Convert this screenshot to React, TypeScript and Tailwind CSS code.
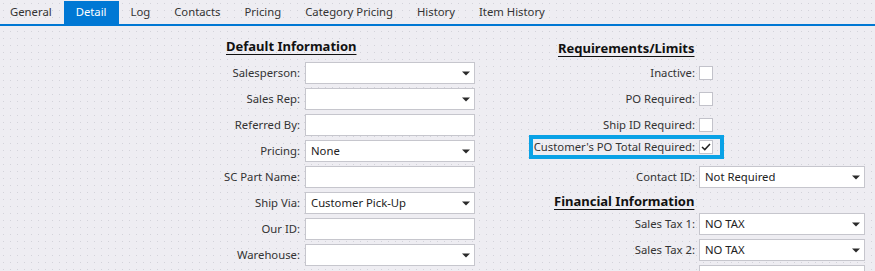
import React from "react";

const tabs = ["General", "Detail", "Log", "Contacts", "Pricing", "Category Pricing", "History", "Item History"];

function Arrow() {
  return (
    <svg width="8" height="5" viewBox="0 0 8 5" className="shrink-0">
      <path d="M0 0.5 H8 L4 4.5 Z" fill="#2a2a2a" />
    </svg>
  );
}

function Field({ value = "", select = false, width }: { value?: string; select?: boolean; width: string }) {
  return (
    <div className={`${width} h-[22px] bg-white border border-[#c6c6cd] flex items-center pl-[5px] pr-[4px] text-[#222]`}>
      <span className="flex-1 truncate">{value}</span>
      {select && <Arrow />}
    </div>
  );
}

function Check({ checked = false }: { checked?: boolean }) {
  return (
    <div className="w-[14px] h-[14px] shrink-0 bg-white border border-[#c2c2ca] flex items-center justify-center">
      {checked && (
        <svg width="10" height="8" viewBox="0 0 10 8">
          <path d="M1 4 L3.8 6.6 L9 1" stroke="#222" strokeWidth="1.5" fill="none" />
        </svg>
      )}
    </div>
  );
}

function LeftRow({ label, value, select }: { label: string; value?: string; select?: boolean }) {
  return (
    <div className="h-[26px] flex items-center">
      <div className="w-[301px] text-right pr-[1px]">{label}</div>
      <div className="w-[4px]" />
      <Field value={value} select={select} width="w-[170px]" />
    </div>
  );
}

function RightRow({ label, children }: { label: string; children: React.ReactNode }) {
  return (
    <div className="h-[26px] flex items-center">
      <div className="w-[167px] text-right pr-[1px]">{label}</div>
      <div className="w-[3px]" />
      {children}
    </div>
  );
}

export default function App() {
  return (
    <div
      className="w-[875px] h-[271px] overflow-hidden bg-[#eeedf2] bg-[radial-gradient(circle,#d3d3da_0.7px,transparent_0.9px)] bg-[length:7px_7px] text-[11.3px] text-[#333]"
      style={{ fontFamily: '"Noto Sans", "Open Sans", sans-serif' }}
    >
      <div className="h-[24px] flex items-end border-b-2 border-[#0078d4] box-content">
        {tabs.map((t, i) => (
          <div
            key={t}
            className={`h-[23px] flex items-center ${i === 0 ? "pl-[10px] pr-[12px]" : "px-[12px]"} ${
              t === "Detail" ? "bg-[#0078d4] text-white" : "text-[#333]"
            }`}
          >
            {t}
          </div>
        ))}
      </div>
      <div className="flex">
        <div className="w-[529px] shrink-0">
          <div className="h-[34px] pt-[11px] pl-[226px]">
            <span className="font-bold text-[13px] underline underline-offset-[3px] text-[#111]">Default Information</span>
          </div>
          <LeftRow label="Salesperson:" select />
          <LeftRow label="Sales Rep:" select />
          <LeftRow label="Referred By:" />
          <LeftRow label="Pricing:" value="None" select />
          <LeftRow label="SC Part Name:" />
          <LeftRow label="Ship Via:" value="Customer Pick-Up" select />
          <LeftRow label="Our ID:" />
          <LeftRow label="Warehouse:" select />
        </div>
        <div className="w-[346px] shrink-0">
          <div className="h-[34px] pt-[13px] pl-[29px]">
            <span className="font-bold text-[13px] underline underline-offset-[3px] text-[#111]">Requirements/Limits</span>
          </div>
          <RightRow label="Inactive:">
            <Check />
          </RightRow>
          <RightRow label="PO Required:">
            <Check />
          </RightRow>
          <RightRow label="Ship ID Required:">
            <Check />
          </RightRow>
          <div className="h-[26px] relative">
            <div className="absolute left-0 top-[-3px] w-[195px] h-[24px] border-[4px] border-[#0aa2e6] flex items-center">
              <div className="w-[163px] text-right pr-[1px] whitespace-nowrap">Customer's PO Total Required:</div>
              <div className="w-[3px]" />
              <Check checked />
            </div>
          </div>
          <RightRow label="Contact ID:">
            <Field value="Not Required" select width="w-[166px]" />
          </RightRow>
          <div className="h-[21px] pt-[2px] pl-[25px]">
            <span className="font-bold text-[13px] underline underline-offset-[3px] text-[#111]">Financial Information</span>
          </div>
          <RightRow label="Sales Tax 1:">
            <Field value="NO TAX" select width="w-[166px]" />
          </RightRow>
          <RightRow label="Sales Tax 2:">
            <Field value="NO TAX" select width="w-[166px]" />
          </RightRow>
          <RightRow label="">
            <Field width="w-[166px]" />
          </RightRow>
        </div>
      </div>
    </div>
  );
}
